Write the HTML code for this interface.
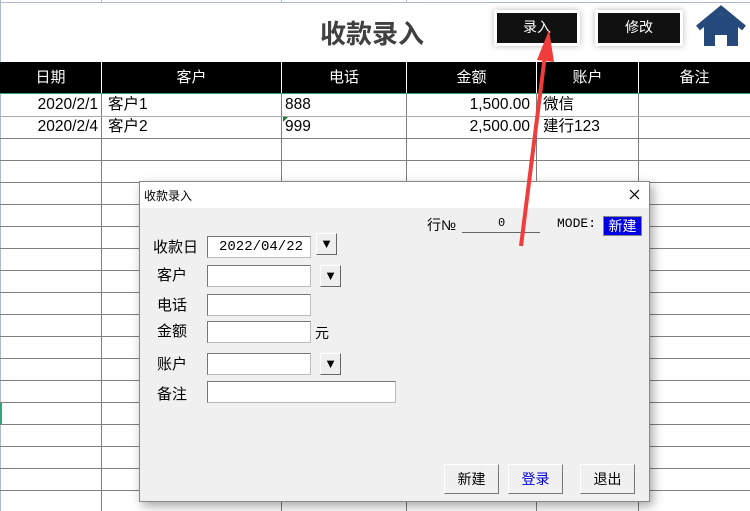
<!DOCTYPE html>
<html><head><meta charset="utf-8"><style>
body{margin:0;width:750px;height:511px;overflow:hidden;background:#fff;position:relative;font-family:"Liberation Sans","Noto Sans CJK SC",sans-serif;}
.a{position:absolute}
.hl{position:absolute;left:0;width:750px;height:1px;background:#7f7f7f}
.vl{position:absolute;width:1px;background:#7f7f7f}
.hd{position:absolute;top:62px;height:31px;background:#000;color:#fff;font-size:15px;line-height:31px;text-align:center}
.c{position:absolute;font-size:15.5px;color:#000;line-height:22px}
.dlg{position:absolute;left:139px;top:181px;width:509px;height:319px;background:#f0f0f0;border:1px solid #888;box-shadow:3px 4px 10px rgba(0,0,0,.35)}
.lb{position:absolute;font-size:14px;color:#000}
.tb{position:absolute;height:20px;background:#fff;border:1px solid #bbb;border-top-color:#777;border-left-color:#777;box-sizing:border-box}
.dd{position:absolute;width:21px;height:22px;background:#eee;border:1px solid #fff;border-right-color:#666;border-bottom-color:#666;box-sizing:border-box;font-size:13px;text-align:center;line-height:20px}
.btn{position:absolute;top:282px;width:55px;height:30px;background:#f0f0f0;border:1px solid #fff;border-right-color:#777;border-bottom-color:#777;box-sizing:border-box;font-size:14px;text-align:center;line-height:28px}
.bk{position:absolute;top:13px;height:30px;background:#111;color:#fff;font-size:14px;text-align:center;line-height:28px;box-shadow:0 0 0 3px #fff,0 0 6px 3px #bbb}
</style></head><body>
<div class="a" style="left:0;top:2px;width:750px;height:1px;background:#b0b8cc"></div>
<div class="a" style="left:0;top:0;width:1px;height:511px;background:#b0b8cc"></div>
<div class="a" style="left:101px;top:0;width:1px;height:3px;background:#b0b8cc"></div>
<div class="a" style="left:281px;top:0;width:1px;height:3px;background:#b0b8cc"></div>
<div class="a" style="left:406px;top:0;width:1px;height:3px;background:#b0b8cc"></div>
<div class="a" style="left:320px;top:14px;font-size:26px;font-weight:bold;color:#404040">收款录入</div>
<div class="bk" style="left:497px;width:80px">录入</div>
<div class="bk" style="left:598px;width:82px">修改</div>
<svg class="a" style="left:695px;top:5px" width="54" height="42"><path d="M3 23 L26 4 L49 23" fill="none" stroke="#24497a" stroke-width="6"/><path d="M9 21 L26 8 L43 21 V41 H32 V30 H20 V41 H9Z" fill="#24497a"/></svg>
<div class="hd" style="left:0;width:101px">日期</div>
<div class="hd" style="left:102px;width:179px">客户</div>
<div class="hd" style="left:282px;width:124px">电话</div>
<div class="hd" style="left:407px;width:129px">金额</div>
<div class="hd" style="left:537px;width:101px">账户</div>
<div class="hd" style="left:639px;width:111px">备注</div>
<div class="a" style="left:0;top:93px;width:750px;height:1px;background:#2fa67a"></div>
<div class="vl" style="left:101px;top:94px;height:417px"></div>
<div class="vl" style="left:281px;top:94px;height:417px"></div>
<div class="vl" style="left:406px;top:94px;height:417px"></div>
<div class="vl" style="left:536px;top:94px;height:417px"></div>
<div class="vl" style="left:638px;top:94px;height:417px"></div>
<div class="hl" style="top:116px;background:#aaa"></div>
<div class="hl" style="top:138px"></div><div class="hl" style="top:160px"></div><div class="hl" style="top:182px"></div><div class="hl" style="top:204px"></div><div class="hl" style="top:226px"></div><div class="hl" style="top:248px"></div><div class="hl" style="top:270px"></div><div class="hl" style="top:292px"></div><div class="hl" style="top:314px"></div><div class="hl" style="top:336px"></div><div class="hl" style="top:358px"></div><div class="hl" style="top:380px"></div><div class="hl" style="top:402px"></div><div class="hl" style="top:424px"></div><div class="hl" style="top:446px"></div><div class="hl" style="top:468px"></div><div class="hl" style="top:490px"></div>
<div class="a" style="left:0;top:403px;width:2px;height:21px;background:#2fa67a"></div>
<div class="c" style="left:0;width:98px;text-align:right;top:94px">2020/2/1</div>
<div class="c" style="left:0;width:98px;text-align:right;top:116px">2020/2/4</div>
<div class="c" style="left:108px;top:94px">客户1</div>
<div class="c" style="left:108px;top:116px">客户2</div>
<div class="c" style="left:285px;top:94px">888</div>
<div class="c" style="left:285px;top:116px">999</div>
<div class="a" style="left:283px;top:117px;width:0;height:0;border-top:5px solid #1a7a2a;border-right:5px solid transparent"></div>
<div class="c" style="left:407px;width:123px;text-align:right;top:94px">1,500.00</div>
<div class="c" style="left:407px;width:123px;text-align:right;top:116px">2,500.00</div>
<div class="c" style="left:543px;top:94px">微信</div>
<div class="c" style="left:543px;top:116px">建行123</div>
<div class="dlg">
<div class="a" style="left:0;top:0;width:509px;height:26px;background:#fff"></div>
<div class="lb" style="left:4px;top:5px;font-size:12px">收款录入</div>
<svg class="a" style="left:489px;top:7px" width="11" height="11"><path d="M1 1L10 10M10 1L1 10" stroke="#000" stroke-width="1.2"/></svg>
<div class="lb" style="left:287px;top:33px">行№</div>
<div class="lb" style="left:358px;top:34px;font-size:12px;font-family:'Liberation Mono',monospace">0</div>
<div class="a" style="left:322px;top:50px;width:78px;height:1px;background:#666"></div>
<div class="lb" style="left:417px;top:34px;font-size:13px;font-family:'Liberation Mono','Noto Sans CJK SC',monospace">MODE:</div>
<div class="a" style="left:463px;top:34px;width:37px;height:18px;background:#0000e0;border:1px solid #888;color:#fff;font-size:14px;line-height:18px;text-align:center">新建</div>
<div class="lb" style="left:13px;top:54px;font-size:15px">收款日</div>
<div class="tb" style="left:67px;top:54px;width:104px;height:22px;font-size:14px;line-height:20px;padding-left:11px;font-family:'Liberation Mono',monospace">2022/04/22</div>
<div class="dd" style="left:176px;top:51px">▼</div>
<div class="lb" style="left:17px;top:82px;font-size:15px">客户</div>
<div class="tb" style="left:67px;top:83px;width:104px;height:22px"></div>
<div class="dd" style="left:180px;top:83px">▼</div>
<div class="lb" style="left:17px;top:112px;font-size:15px">电话</div>
<div class="tb" style="left:67px;top:112px;width:104px;height:22px"></div>
<div class="lb" style="left:17px;top:138px;font-size:15px">金额</div>
<div class="tb" style="left:67px;top:139px;width:104px;height:22px"></div>
<div class="lb" style="left:175px;top:141px">元</div>
<div class="lb" style="left:17px;top:171px;font-size:15px">账户</div>
<div class="tb" style="left:67px;top:171px;width:104px;height:22px"></div>
<div class="dd" style="left:180px;top:171px">▼</div>
<div class="lb" style="left:17px;top:201px;font-size:15px">备注</div>
<div class="tb" style="left:67px;top:199px;width:189px;height:22px"></div>
<div class="btn" style="left:304px">新建</div>
<div class="btn" style="left:368px;color:#0000dd">登录</div>
<div class="btn" style="left:440px">退出</div>
</div>
<svg class="a" style="left:0;top:0" width="750" height="511"><line x1="521" y1="246" x2="545" y2="55" stroke="#f23b3b" stroke-width="4"/><path d="M537 60 L549 30 L554 62Z" fill="#f23b3b"/></svg>
</body></html>
